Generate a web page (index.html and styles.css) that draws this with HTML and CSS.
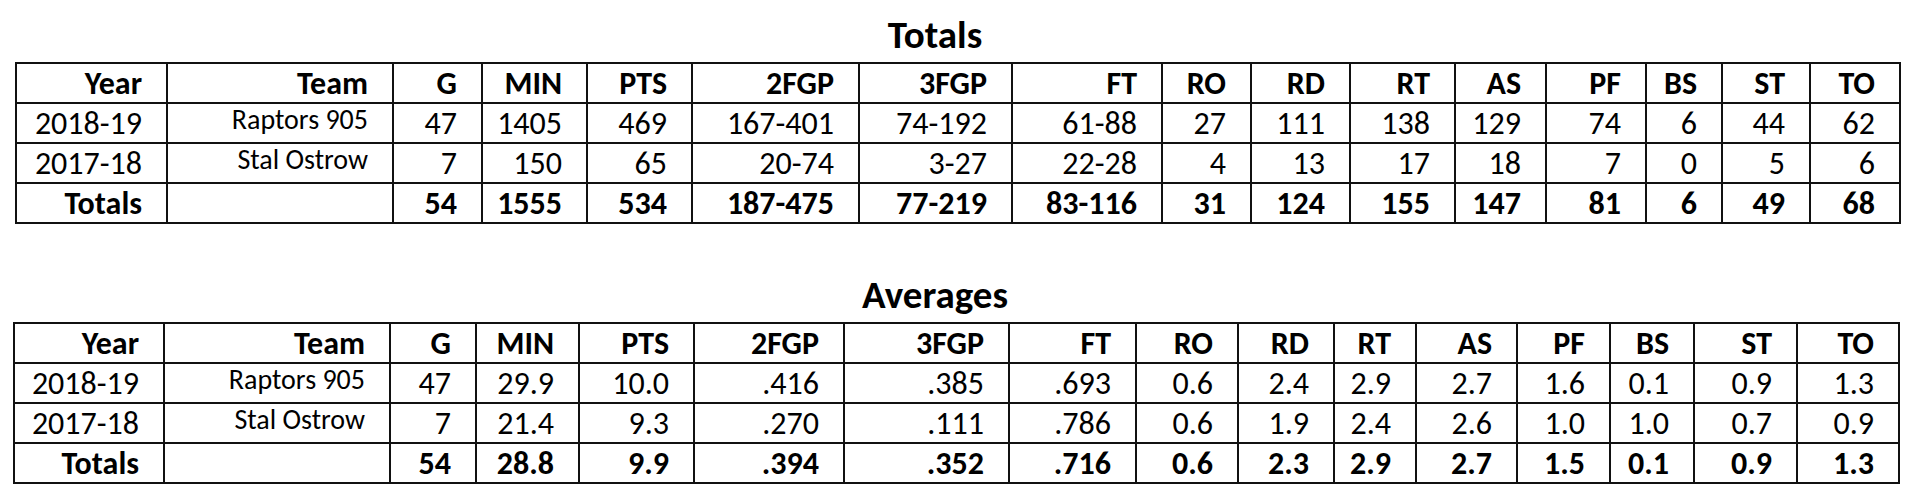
FILE: index.html
```html
<!DOCTYPE html>
<html lang="en">
<head>
<meta charset="utf-8">
<title>Stats</title>
<link rel="stylesheet" href="styles.css">
</head>
<body>
<h2 class="title title-first">Totals</h2>
<table class="stats stats-totals">
  <colgroup>
    <col class="c1"><col class="c2"><col class="c3"><col class="c4"><col class="c5"><col class="c6"><col class="c7"><col class="c8"><col class="c9"><col class="c10"><col class="c11"><col class="c12"><col class="c13"><col class="c14"><col class="c15"><col class="c16">
  </colgroup>
  <tr class="head">
    <td>Year</td><td>Team</td><td>G</td><td>MIN</td><td>PTS</td><td>2FGP</td><td>3FGP</td><td>FT</td><td>RO</td><td>RD</td><td>RT</td><td>AS</td><td>PF</td><td>BS</td><td>ST</td><td>TO</td>
  </tr>
  <tr>
    <td>2018-19</td><td class="team">Raptors 905</td><td>47</td><td>1405</td><td>469</td><td>167-401</td><td>74-192</td><td>61-88</td><td>27</td><td>111</td><td>138</td><td>129</td><td>74</td><td>6</td><td>44</td><td>62</td>
  </tr>
  <tr>
    <td>2017-18</td><td class="team">Stal Ostrow</td><td>7</td><td>150</td><td>65</td><td>20-74</td><td>3-27</td><td>22-28</td><td>4</td><td>13</td><td>17</td><td>18</td><td>7</td><td>0</td><td>5</td><td>6</td>
  </tr>
  <tr class="sum">
    <td>Totals</td><td></td><td>54</td><td>1555</td><td>534</td><td>187-475</td><td>77-219</td><td>83-116</td><td>31</td><td>124</td><td>155</td><td>147</td><td>81</td><td>6</td><td>49</td><td>68</td>
  </tr>
</table>

<h2 class="title title-second">Averages</h2>
<table class="stats stats-avg">
  <colgroup>
    <col class="c1"><col class="c2"><col class="c3"><col class="c4"><col class="c5"><col class="c6"><col class="c7"><col class="c8"><col class="c9"><col class="c10"><col class="c11"><col class="c12"><col class="c13"><col class="c14"><col class="c15"><col class="c16">
  </colgroup>
  <tr class="head">
    <td>Year</td><td>Team</td><td>G</td><td>MIN</td><td>PTS</td><td>2FGP</td><td>3FGP</td><td>FT</td><td>RO</td><td>RD</td><td>RT</td><td>AS</td><td>PF</td><td>BS</td><td>ST</td><td>TO</td>
  </tr>
  <tr>
    <td>2018-19</td><td class="team">Raptors 905</td><td>47</td><td>29.9</td><td>10.0</td><td>.416</td><td>.385</td><td>.693</td><td>0.6</td><td>2.4</td><td>2.9</td><td>2.7</td><td>1.6</td><td>0.1</td><td>0.9</td><td>1.3</td>
  </tr>
  <tr>
    <td>2017-18</td><td class="team">Stal Ostrow</td><td>7</td><td>21.4</td><td>9.3</td><td>.270</td><td>.111</td><td>.786</td><td>0.6</td><td>1.9</td><td>2.4</td><td>2.6</td><td>1.0</td><td>1.0</td><td>0.7</td><td>0.9</td>
  </tr>
  <tr class="sum">
    <td>Totals</td><td></td><td>54</td><td>28.8</td><td>9.9</td><td>.394</td><td>.352</td><td>.716</td><td>0.6</td><td>2.3</td><td>2.9</td><td>2.7</td><td>1.5</td><td>0.1</td><td>0.9</td><td>1.3</td>
  </tr>
</table>
</body>
</html>
```
FILE: styles.css
```css
html, body {
  margin: 0;
  padding: 0;
  background: #ffffff;
}

body {
  font-family: Carlito, Calibri, Lato, sans-serif;
  color: #000000;
}

.title {
  width: 1870px;
  margin: 0 0 3px 0;
  height: 49px;
  font-size: 39px;
  line-height: 49px;
  font-weight: bold;
  text-align: center;
}

.title-first {
  margin-top: 10px;
}

.title-second {
  margin-top: 46px;
}

.stats {
  border-collapse: collapse;
  table-layout: fixed;
}

.stats td {
  border: 2px solid #111111;
  height: 36px;
  padding: 2px 24px 0 0;
  text-align: right;
  vertical-align: top;
  font-size: 32px;
  line-height: 36px;
  white-space: nowrap;
}

.stats .head td,
.stats .sum td {
  font-weight: bold;
}

.stats td.team {
  font-size: 28px;
  line-height: 27px;
}

/* Totals table */
.stats-totals {
  width: 1884px;
  margin-left: 15px;
}
.stats-totals .c1 { width: 151px; }
.stats-totals .c2 { width: 226px; }
.stats-totals .c3 { width: 89px; }
.stats-totals .c4 { width: 105px; }
.stats-totals .c5 { width: 105px; }
.stats-totals .c6 { width: 167px; }
.stats-totals .c7 { width: 153px; }
.stats-totals .c8 { width: 150px; }
.stats-totals .c9 { width: 89px; }
.stats-totals .c10 { width: 99px; }
.stats-totals .c11 { width: 105px; }
.stats-totals .c12 { width: 91px; }
.stats-totals .c13 { width: 100px; }
.stats-totals .c14 { width: 76px; }
.stats-totals .c15 { width: 88px; }
.stats-totals .c16 { width: 90px; }

/* Averages table */
.stats-avg {
  width: 1885px;
  margin-left: 13px;
}
.stats-avg .c1 { width: 150px; }
.stats-avg .c2 { width: 226px; }
.stats-avg .c3 { width: 86px; }
.stats-avg .c4 { width: 103px; }
.stats-avg .c5 { width: 115px; }
.stats-avg .c6 { width: 150px; }
.stats-avg .c7 { width: 165px; }
.stats-avg .c8 { width: 127px; }
.stats-avg .c9 { width: 102px; }
.stats-avg .c10 { width: 96px; }
.stats-avg .c11 { width: 82px; }
.stats-avg .c12 { width: 101px; }
.stats-avg .c13 { width: 93px; }
.stats-avg .c14 { width: 84px; }
.stats-avg .c15 { width: 103px; }
.stats-avg .c16 { width: 102px; }
```
